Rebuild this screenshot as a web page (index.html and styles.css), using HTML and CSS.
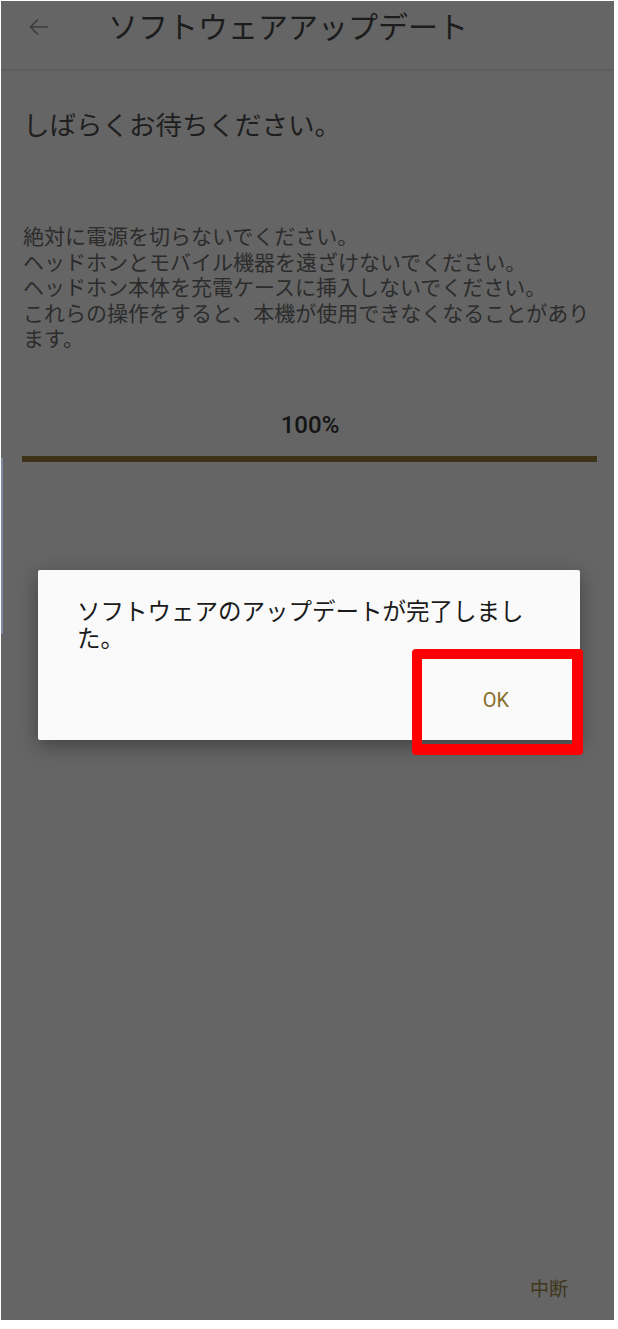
FILE: index.html
```html
<!DOCTYPE html>
<html lang="ja">
<head>
  <meta charset="UTF-8" />
  <meta name="viewport" content="width=device-width, initial-scale=1.0"/>
  <title>ソフトウェアアップデート</title>
  <link rel="stylesheet" href="styles.css">
</head>
<body>
  <div class="screen">
    <!-- Top app bar -->
    <header class="appbar">
      <svg class="back-icon" viewBox="0 0 24 24" width="24" height="24">
        <path d="M21 12H3.5M11 4.5L3.5 12l7.5 7.5"/>
      </svg>
      <h1 class="appbar-title">ソフトウェアアップデート</h1>
    </header>

    <main class="content">
      <p class="lead">しばらくお待ちください。</p>
      <p class="warning">
        絶対に電源を切らないでください。<br>
        ヘッドホンとモバイル機器を遠ざけないでください。<br>
        ヘッドホン本体を充電ケースに挿入しないでください。<br>
        これらの操作をすると、本機が使用できなくなることがあり<br>
        ます。
      </p>
      <div class="percent">100%</div>
      <div class="progress"><div class="progress-fill" style="width:100%"></div></div>
    </main>

    <footer class="actions">
      <button class="text-button">中断</button>
    </footer>

    <span class="edge-strip"></span>

    <!-- Completion dialog -->
    <div class="dialog">
      <p class="dialog-message">ソフトウェアのアップデートが完了しました。</p>
      <div class="dialog-actions">
        <button class="dialog-button">OK</button>
      </div>
    </div>
    <span class="highlight"></span>
  </div>
</body>
</html>
```

FILE: styles.css
```css
/* Page */
html, body {
  margin: 0;
  padding: 0;
  background: #ffffff;
}
body {
  font-family: Roboto, "Noto Sans CJK JP", sans-serif;
}
.screen {
  position: relative;
  box-sizing: border-box;
  margin: 1px 0 0 1px;
  width: 613px;
  height: 1319px;
  background: #656565;
  display: flex;
  flex-direction: column;
  overflow: hidden;
}

/* App bar */
.appbar {
  box-sizing: border-box;
  height: 69px;
  flex-shrink: 0;
  display: flex;
  align-items: flex-start;
  padding: 12px 0 0 26px;
  border-bottom: 1px solid #5d5d5d;
  box-shadow: 0 1px 2px rgba(0, 0, 0, 0.08);
}
.back-icon {
  fill: none;
  stroke: #3c3c3c;
  stroke-width: 1.7;
  margin-top: 2px;
}
.appbar-title {
  margin: 0 0 0 57px;
  font-size: 30px;
  line-height: 30px;
  font-weight: 400;
  color: #1c1c1c;
}

/* Main content */
.content {
  flex: 1;
  padding: 0 17px 0 22px;
}
.lead {
  margin: 41px 0 0 0;
  font-size: 26.5px;
  line-height: 30px;
  color: #1e1e1e;
}
.warning {
  margin: 84px 0 0 0;
  font-size: 21px;
  line-height: 25.5px;
  color: #2c2c2c;
}
.percent {
  margin-top: 59px;
  text-align: center;
  font-size: 24px;
  line-height: 26px;
  font-weight: 500;
  color: #141414;
}
.progress {
  margin: 18px 0 0 -1px;
  height: 6px;
  background: #4a4a4a;
}
.progress-fill {
  height: 100%;
  background: #3d3117;
}

/* Bottom actions */
.actions {
  display: flex;
  justify-content: flex-end;
  padding: 0 46px 18px 0;
}
.text-button {
  background: none;
  border: none;
  padding: 0;
  font-family: inherit;
  font-size: 19px;
  line-height: 24px;
  color: #3f361a;
}

/* Screenshot edge artefact */
.edge-strip {
  position: absolute;
  left: -1px;
  top: 457px;
  width: 3px;
  height: 176px;
  background: #7c8aa0;
}

/* Dialog */
.dialog {
  position: absolute;
  left: 37px;
  top: 569px;
  width: 542px;
  height: 170px;
  box-sizing: border-box;
  background: #fafafa;
  border-radius: 2px;
  box-shadow: 0 6px 20px rgba(0, 0, 0, 0.35);
  padding: 29px 40px 0 39px;
  display: flex;
  flex-direction: column;
}
.dialog-message {
  margin: 0;
  font-size: 23.5px;
  line-height: 27px;
  color: #1a1a1a;
}
.dialog-actions {
  display: flex;
  justify-content: flex-end;
  margin-top: 35px;
}
.dialog-button {
  background: none;
  border: none;
  padding: 0;
  margin-right: 31px;
  font-family: inherit;
  font-size: 20px;
  line-height: 24px;
  color: #8a6f2c;
}

/* Red annotation box round the OK button */
.highlight {
  position: absolute;
  left: 411px;
  top: 648px;
  width: 150px;
  height: 85px;
  border: 10px solid #ff0000;
  border-right-width: 11px;
  border-bottom-width: 11px;
  border-radius: 4px;
}
```
